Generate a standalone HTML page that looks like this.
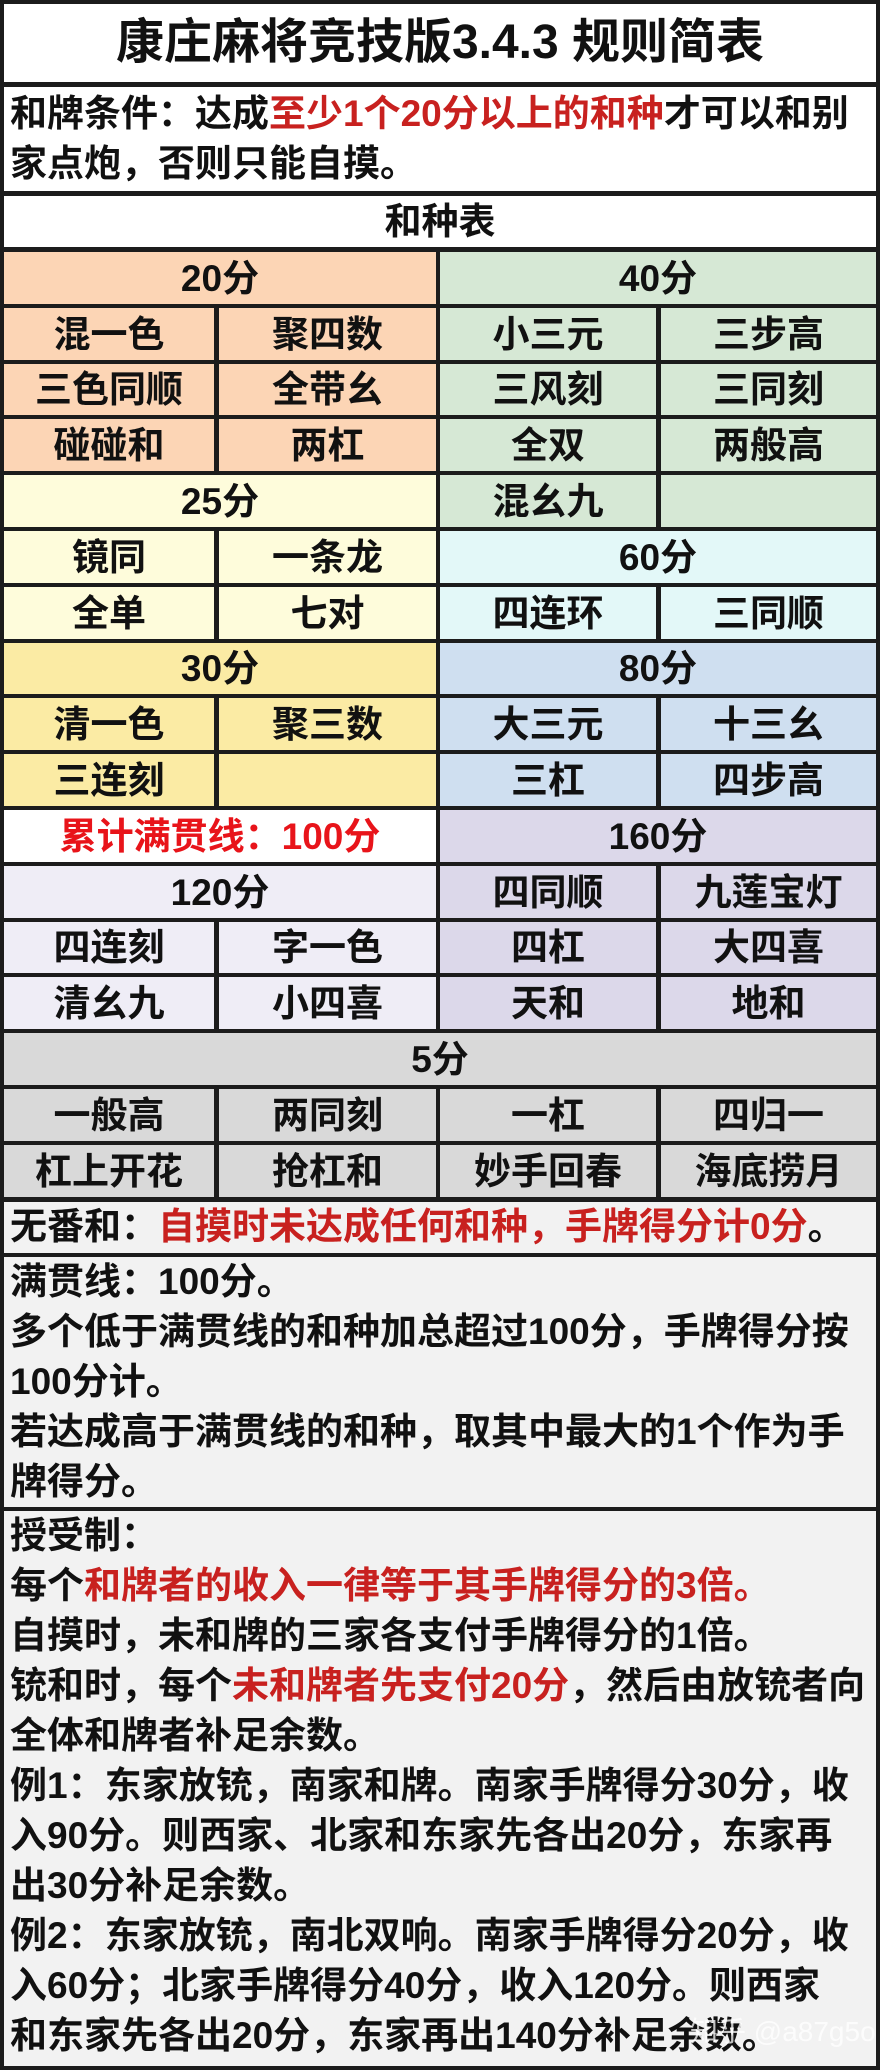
<!DOCTYPE html>
<html><head><meta charset="utf-8">
<style>
*{margin:0;padding:0;box-sizing:border-box}
body{width:880px;height:2070px;background:#1c1c1c;position:relative;overflow:hidden;font-family:"Liberation Sans","Noto Sans CJK SC",sans-serif;font-weight:700;color:#111}
.c{position:absolute;display:flex;align-items:center;justify-content:center;font-size:37px;white-space:nowrap;line-height:1}
.t{position:absolute;left:4px;width:872px;font-size:37px;line-height:50px;padding-left:6px;white-space:nowrap;background:#f2f2f2;overflow:hidden}
.r{color:#c8211f}
</style></head><body>
<div class="c" style="left:4px;top:4px;width:872px;height:78px;background:#fff;font-size:48px">康庄麻将竞技版3.4.3 规则简表</div>
<div class="t" style="top:87px;height:104px;background:#fff;padding-top:2px">和牌条件：达成<span class="r">至少1个20分以上的和种</span>才可以和别<br>家点炮，否则只能自摸。</div>
<div class="c" style="left:4px;top:196px;width:872px;height:51px;background:#fff">和种表</div>

<div class="c" style="left:4px;top:252px;width:432px;height:52px;background:#fcd5b5">20分</div>
<div class="c" style="left:440px;top:252px;width:436px;height:52px;background:#d6e8d5">40分</div>
<div class="c" style="left:4px;top:308px;width:210px;height:52px;background:#fcd5b5">混一色</div>
<div class="c" style="left:219px;top:308px;width:217px;height:52px;background:#fcd5b5">聚四数</div>
<div class="c" style="left:440px;top:308px;width:216px;height:52px;background:#d6e8d5">小三元</div>
<div class="c" style="left:661px;top:308px;width:215px;height:52px;background:#d6e8d5">三步高</div>
<div class="c" style="left:4px;top:364px;width:210px;height:51px;background:#fcd5b5">三色同顺</div>
<div class="c" style="left:219px;top:364px;width:217px;height:51px;background:#fcd5b5">全带幺</div>
<div class="c" style="left:440px;top:364px;width:216px;height:51px;background:#d6e8d5">三风刻</div>
<div class="c" style="left:661px;top:364px;width:215px;height:51px;background:#d6e8d5">三同刻</div>
<div class="c" style="left:4px;top:419px;width:210px;height:52px;background:#fcd5b5">碰碰和</div>
<div class="c" style="left:219px;top:419px;width:217px;height:52px;background:#fcd5b5">两杠</div>
<div class="c" style="left:440px;top:419px;width:216px;height:52px;background:#d6e8d5">全双</div>
<div class="c" style="left:661px;top:419px;width:215px;height:52px;background:#d6e8d5">两般高</div>
<div class="c" style="left:4px;top:475px;width:432px;height:52px;background:#fefcdb">25分</div>
<div class="c" style="left:440px;top:475px;width:216px;height:52px;background:#d6e8d5">混幺九</div>
<div class="c" style="left:661px;top:475px;width:215px;height:52px;background:#d6e8d5"></div>
<div class="c" style="left:4px;top:531px;width:210px;height:52px;background:#fefcdb">镜同</div>
<div class="c" style="left:219px;top:531px;width:217px;height:52px;background:#fefcdb">一条龙</div>
<div class="c" style="left:440px;top:531px;width:436px;height:52px;background:#e3f8f8">60分</div>
<div class="c" style="left:4px;top:587px;width:210px;height:52px;background:#fefcdb">全单</div>
<div class="c" style="left:219px;top:587px;width:217px;height:52px;background:#fefcdb">七对</div>
<div class="c" style="left:440px;top:587px;width:216px;height:52px;background:#e3f8f8">四连环</div>
<div class="c" style="left:661px;top:587px;width:215px;height:52px;background:#e3f8f8">三同顺</div>
<div class="c" style="left:4px;top:643px;width:432px;height:51px;background:#fbeba4">30分</div>
<div class="c" style="left:440px;top:643px;width:436px;height:51px;background:#cfdff0">80分</div>
<div class="c" style="left:4px;top:698px;width:210px;height:52px;background:#fbeba4">清一色</div>
<div class="c" style="left:219px;top:698px;width:217px;height:52px;background:#fbeba4">聚三数</div>
<div class="c" style="left:440px;top:698px;width:216px;height:52px;background:#cfdff0">大三元</div>
<div class="c" style="left:661px;top:698px;width:215px;height:52px;background:#cfdff0">十三幺</div>
<div class="c" style="left:4px;top:754px;width:210px;height:52px;background:#fbeba4">三连刻</div>
<div class="c" style="left:219px;top:754px;width:217px;height:52px;background:#fbeba4"></div>
<div class="c" style="left:440px;top:754px;width:216px;height:52px;background:#cfdff0">三杠</div>
<div class="c" style="left:661px;top:754px;width:215px;height:52px;background:#cfdff0">四步高</div>
<div class="c" style="left:4px;top:810px;width:432px;height:52px;background:#fff;color:#e8141a">累计满贯线：100分</div>
<div class="c" style="left:440px;top:810px;width:436px;height:52px;background:#dcd8ea">160分</div>
<div class="c" style="left:4px;top:866px;width:432px;height:52px;background:#efedf6">120分</div>
<div class="c" style="left:440px;top:866px;width:216px;height:52px;background:#dcd8ea">四同顺</div>
<div class="c" style="left:661px;top:866px;width:215px;height:52px;background:#dcd8ea">九莲宝灯</div>
<div class="c" style="left:4px;top:922px;width:210px;height:51px;background:#efedf6">四连刻</div>
<div class="c" style="left:219px;top:922px;width:217px;height:51px;background:#efedf6">字一色</div>
<div class="c" style="left:440px;top:922px;width:216px;height:51px;background:#dcd8ea">四杠</div>
<div class="c" style="left:661px;top:922px;width:215px;height:51px;background:#dcd8ea">大四喜</div>
<div class="c" style="left:4px;top:977px;width:210px;height:52px;background:#efedf6">清幺九</div>
<div class="c" style="left:219px;top:977px;width:217px;height:52px;background:#efedf6">小四喜</div>
<div class="c" style="left:440px;top:977px;width:216px;height:52px;background:#dcd8ea">天和</div>
<div class="c" style="left:661px;top:977px;width:215px;height:52px;background:#dcd8ea">地和</div>
<div class="c" style="left:4px;top:1033px;width:872px;height:52px;background:#d9d9d9">5分</div>
<div class="c" style="left:4px;top:1089px;width:210px;height:52px;background:#d9d9d9">一般高</div>
<div class="c" style="left:219px;top:1089px;width:217px;height:52px;background:#d9d9d9">两同刻</div>
<div class="c" style="left:440px;top:1089px;width:216px;height:52px;background:#d9d9d9">一杠</div>
<div class="c" style="left:661px;top:1089px;width:215px;height:52px;background:#d9d9d9">四归一</div>
<div class="c" style="left:4px;top:1145px;width:210px;height:52px;background:#d9d9d9">杠上开花</div>
<div class="c" style="left:219px;top:1145px;width:217px;height:52px;background:#d9d9d9">抢杠和</div>
<div class="c" style="left:440px;top:1145px;width:216px;height:52px;background:#d9d9d9">妙手回春</div>
<div class="c" style="left:661px;top:1145px;width:215px;height:52px;background:#d9d9d9">海底捞月</div>

<div class="t" style="top:1202px;height:51px">无番和：<span class="r">自摸时未达成任何和种，手牌得分计0分</span>。</div>
<div class="t" style="top:1257px;height:250px">满贯线：100分。<br>多个低于满贯线的和种加总超过100分，手牌得分按<br>100分计。<br>若达成高于满贯线的和种，取其中最大的1个作为手<br>牌得分。</div>
<div class="t" style="top:1511px;height:555px">授受制：<br>每个<span class="r">和牌者的收入一律等于其手牌得分的3倍。</span><br>自摸时，未和牌的三家各支付手牌得分的1倍。<br>铳和时，每个<span class="r">未和牌者先支付20分</span>，然后由放铳者向<br>全体和牌者补足余数。<br>例1：东家放铳，南家和牌。南家手牌得分30分，收<br>入90分。则西家、北家和东家先各出20分，东家再<br>出30分补足余数。<br>例2：东家放铳，南北双响。南家手牌得分20分，收<br>入60分；北家手牌得分40分，收入120分。则西家<br>和东家先各出20分，东家再出140分补足余数。</div>
<div style="position:absolute;left:690px;top:2010px;font-size:28px;font-weight:400;color:rgba(255,255,255,0.75);white-space:nowrap">知乎 @a87g5o</div>
</body></html>
